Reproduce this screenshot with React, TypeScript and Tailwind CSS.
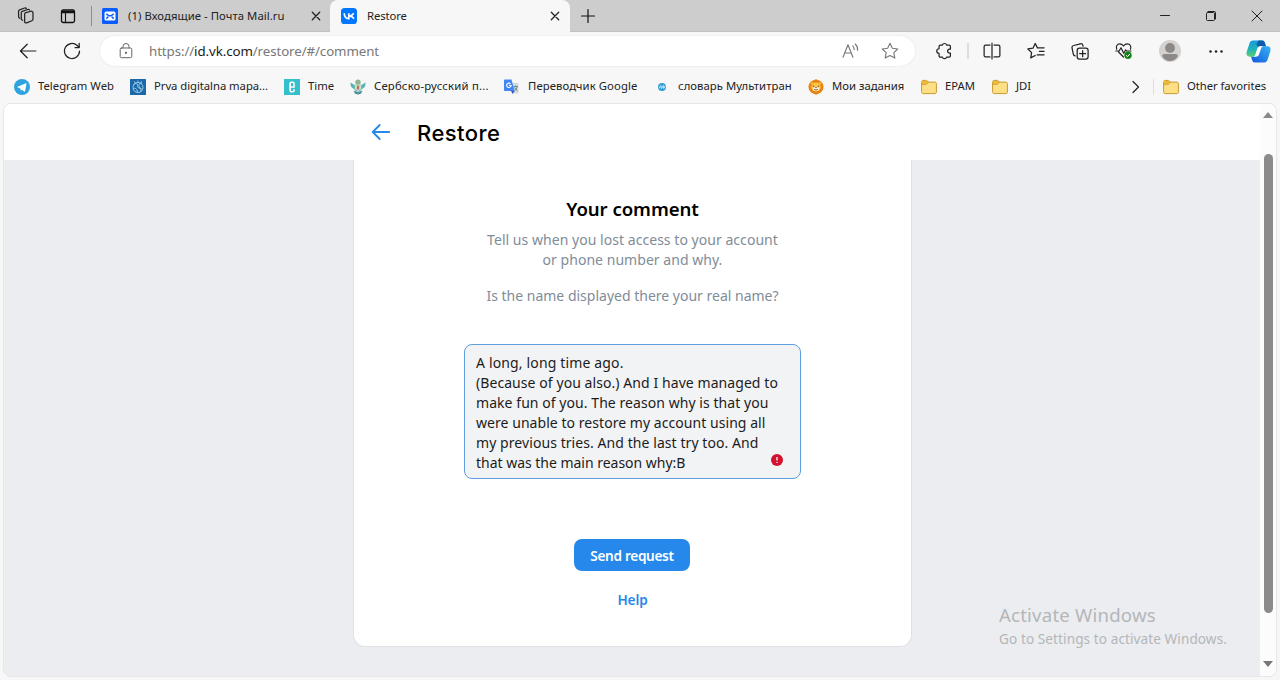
import React from "react";

type P = { children?: React.ReactNode; className?: string };

const Cell = ({ children, className = "" }: P) => (
  <div className={`flex h-full shrink-0 items-center justify-center ${className}`}>{children}</div>
);

const Icon = ({ children, className = "h-4 w-4" }: P) => (
  <svg viewBox="0 0 16 16" fill="none" stroke="currentColor" strokeWidth="1.1" strokeLinecap="round" strokeLinejoin="round" className={`shrink-0 ${className}`}>
    {children}
  </svg>
);

const Close = () => (
  <Icon className="h-4 w-4 text-[#222]">
    <path d="M4.3 4.3l7.4 7.4M11.7 4.3l-7.4 7.4" strokeWidth="1.3" />
  </Icon>
);

const Folder = () => (
  <Icon className="h-4 w-4">
    <path d="M.6 2.900c0-.9.6-1.500 1.500-1.500h3.400l1.900 1.700h6.500c.9 0 1.500.6 1.500 1.500v8.500c0 .9-.6 1.500-1.500 1.500H2.100c-.9 0-1.500-.6-1.500-1.500z" fill="#fddf85" stroke="#c99a2c" strokeWidth="1" />
    <path d="M1.100 2.900c0-.6.400-1 1-1h3.200l1.500 1.400L5.200 4.800H1.100z" fill="#f0b92e" stroke="none" />
    <path d="M.8 5.200h4.600l2-2" stroke="#c99a2c" strokeWidth="1" />
  </Icon>
);

const Bookmark = ({ icon, label, className = "", text = "" }: { icon: React.ReactNode; label: string; className?: string; text?: string }) => (
  <div className={`flex shrink-0 items-center gap-2 ${className}`}>
    {icon}
    <span className={`whitespace-nowrap ${text}`}>{label}</span>
  </div>
);

function TabStrip() {
  return (
    <div className="flex h-8 shrink-0 items-stretch border-b border-[#c2c2c2] bg-[#cdcdcd]">
      <Cell className="w-[52px]">
        <Icon className="h-[18px] w-[18px] text-[#222]">
          <path d="M7.2 5.3l5.2-1.5c.9-.2 1.8.3 1.8 1.2v5.8c0 .7-.4 1.2-1 1.400l-4.600 1.900c-.9.3-1.800-.2-1.800-1.100V6.500c0-.6.1-1 .4-1.200z" />
          <path d="M5 11.800l-.5-.3c-.5-.3-.7-.7-.7-1.300V5.200c0-.6.3-1.100.9-1.300l4.800-1.700c.7-.2 1.300 0 1.600.5" />
          <path d="M2.500 10l-.4-.3c-.5-.3-.7-.7-.7-1.300V3.800c0-.6.3-1.100.9-1.300L6.800.9c.6-.2 1.200 0 1.500.5" />
        </Icon>
      </Cell>
      <Cell className="w-8">
        <Icon className="h-4 w-4 text-[#111]">
          <rect x="1.500" y="2" width="13" height="12.500" rx="1.800" strokeWidth="1.300" />
          <path d="M2 3.500h12M2 4.500h12" strokeWidth="1.500" />
          <path d="M5.500 5v9" />
        </Icon>
      </Cell>
      <div className="ml-[7px] mt-[6px] h-5 w-px bg-[#8d8d8d]" />
      <div className="flex w-[238px] items-center pl-[10px] text-[11.3px] text-[#222]">
        <svg viewBox="0 0 16 16" className="h-4 w-4 shrink-0">
          <rect width="16" height="16" rx="1.500" fill="#0a5cff" />
          <rect x="2.500" y="3.500" width="11" height="9" rx="1.500" fill="#fff" />
          <path d="M4.300 5.800l2.700 2h2l2.700-2M4.300 10.600l2-1.900M11.700 10.600l-2-1.900" fill="none" stroke="#0a5cff" strokeWidth="1.500" />
        </svg>
        <span className="ml-[10px] w-[180px] whitespace-nowrap pt-px tracking-[0.06px]">(1) Входящие - Почта Mail.ru</span>
        <Close />
      </div>
      <div className="-mb-px flex w-60 items-center rounded-t-lg bg-[#f7f7f7] pb-px pl-[11px] text-[11.3px] text-[#222]">
        <svg viewBox="0 0 16 16" className="h-4 w-4 shrink-0">
          <rect width="16" height="16" rx="3.600" fill="#0077ff" />
          <path d="M3.200 5.200c.2 3.400 1.900 5.300 4.600 5.500V5.200M12.600 5.200C12 6.800 10.600 7.800 8 8c2.800.2 4.300 1.300 4.900 2.800" fill="none" stroke="#fff" strokeWidth="1.700" />
        </svg>
        <span className="ml-[10px] w-[180px] whitespace-nowrap pt-px tracking-[-0.1px]">Restore</span>
        <Close />
      </div>
      <Cell className="w-9">
        <Icon className="h-4 w-4 text-[#111]">
          <path d="M8 1.500v13M1.500 8h13" strokeWidth="1.200" />
        </Icon>
      </Cell>
      <div className="flex-1" />
      <Cell className="w-[46px] text-[#222]">
        <Icon><path d="M3.500 7.500h9" strokeWidth="1" /></Icon>
      </Cell>
      <Cell className="w-[46px] text-[#222]">
        <Icon>
          <rect x="3.500" y="4.500" width="8" height="8" rx="1" strokeWidth="1" />
          <path d="M5 3.500h6.500c.6 0 1 .4 1 1V11" strokeWidth="1" />
        </Icon>
      </Cell>
      <Cell className="w-[46px] text-[#222]">
        <Icon><path d="M3 3l10 10M13 3L3 13" strokeWidth="1" /></Icon>
      </Cell>
    </div>
  );
}

function Toolbar() {
  return (
    <div className="flex h-[38px] shrink-0 items-center pl-[6px] text-[#222]">
      <Cell className="w-11">
        <Icon className="h-[18px] w-[18px]"><path d="M15 8H1.300M7.300 2L1.300 8l6 6" strokeWidth="1.100" /></Icon>
      </Cell>
      <Cell className="w-11">
        <Icon className="h-[18px] w-[18px]"><path d="M14.700 8A6.700 6.700 0 1 1 12.600 3.100L14.300 4.800M14.400 1.200v3.700h-3.700" strokeWidth="1.100" /></Icon>
      </Cell>
      <div className="ml-[6px] flex h-[30px] w-[815px] shrink-0 items-center rounded-full bg-white pl-[18px] shadow-[0_0_2px_#ddd]">
        <Icon className="h-4 w-4 text-[#666]">
          <rect x="2.200" y="5" width="11.600" height="9.700" rx="1.300" strokeWidth="1" />
          <path d="M5 5V3.500a3 3 0 0 1 6 0V5" strokeWidth="1" />
          <circle cx="8" cy="9.800" r=".6" fill="currentColor" />
        </Icon>
        <span className="ml-[15px] flex-1 whitespace-nowrap pt-px text-[13.3px] tracking-[-0.09px] text-[#777]">
          https://<span className="text-[#1b1b1b]">id.vk.com</span>/restore/#/comment
        </span>
        <Icon className="mr-[22px] h-[18px] w-[18px] text-[#777]">
          <path d="M1.800 13.500L6.200 2.500l4.400 11M3.400 9.800h5.700" strokeWidth="1" />
          <path d="M10.500 3.500c.9.9 1.300 2 1.200 3.300M12.600 1.800c1.700 1.500 2.400 3.400 2.100 5.600" strokeWidth="1" />
        </Icon>
        <Icon className="mr-4 h-[18px] w-[18px] text-[#777]">
          <path d="M8 1.200l2.100 4.300 4.800.7-3.500 3.300.9 4.800L8 12l-4.300 2.300.9-4.800L1.100 6.200l4.800-.7z" strokeWidth="1" />
        </Icon>
      </div>
      <Cell className="ml-[7px] w-[43px]">
        <Icon className="h-[18px] w-[18px]">
          <path d="M3.600 5.900V4c0-.7.500-1.200 1.200-1.200h1.800a1.900 1.900 0 0 1 3.700 0h2.200c.7 0 1.200.5 1.200 1.200v2.400h-.8a1.700 1.700 0 0 0 0 3.400h.8v2.400c0 .7-.5 1.200-1.200 1.200h-2.200a1.900 1.900 0 0 1-3.700 0H4.800c-.7 0-1.200-.5-1.200-1.200v-2.100a2 2 0 0 1 0-4.100z" />
        </Icon>
      </Cell>
      <div className="ml-[2px] mr-px h-4 w-[2px] bg-[#dcdcdc]" />
      <Cell className="w-[43px]">
        <Icon className="h-[18px] w-[18px]"><path d="M6.200 2.700H2.300c-.8 0-1.300.5-1.300 1.300v8c0 .8.5 1.300 1.300 1.300h3.900M9.800 2.700h3.900c.8 0 1.300.5 1.300 1.300v8c0 .8-.5 1.300-1.300 1.300H9.800M8 1v14" /></Icon>
      </Cell>
      <Cell className="w-[45px]">
        <Icon className="h-[18px] w-[18px]">
          <path d="M9.500 5.200h-.2L7.300 1.300 5.300 5.500l-4.500.7 3.300 3.200-.8 4.700 4-2.100M9.500 5.200h5.700M11 8.300h4.200M9 11.400h6.200" />
        </Icon>
      </Cell>
      <Cell className="w-11">
        <Icon className="h-[18px] w-[18px]">
          <rect x="5.500" y="5.500" width="9.700" height="9.700" rx="2" />
          <path d="M10.350 7.700v5.300M7.700 10.350H13M3.700 12.300c-.8-.1-1.400-.6-1.600-1.400L.9 5.200c-.2-1 .4-1.900 1.400-2.100l6.100-1.500c1-.2 1.900.4 2.200 1.400l.1.600" />
        </Icon>
      </Cell>
      <Cell className="w-11">
        <svg viewBox="0 0 18 18" className="h-[18px] w-[18px]" fill="none" stroke="currentColor" strokeWidth="1.200" strokeLinejoin="round" strokeLinecap="round">
          <path d="M1.700 7.200C.5 4.300 2.300 1.900 4.700 1.900c1.700 0 2.800.8 3.800 2.100 1-1.300 2.100-2.100 3.900-2.100 2.500 0 4.200 2.500 3.100 5.300M3.500 10l5 5M.8 9h3.300l1.900-3.300 2.700 5.600 2-3.500.9 1.200H16" />
          <circle cx="13" cy="13.300" r="3.700" fill="#138018" stroke="none" />
          <path d="M11.300 13.500l1.200 1.100 2.300-2.400" stroke="#fff" strokeWidth="1" />
        </svg>
      </Cell>
      <Cell className="w-12">
        <svg viewBox="0 0 22 22" className="h-[22px] w-[22px]">
          <circle cx="11" cy="11" r="11" fill="#d4d2d0" />
          <circle cx="11" cy="8" r="4.900" fill="#8b8886" />
          <path d="M3.200 16.200c0-1.300.9-2.100 2.200-2.100h11.200c1.300 0 2.200.8 2.200 2.100-1.600 3-4.600 4.800-7.800 4.800s-6.200-1.800-7.800-4.800z" fill="#8b8886" />
        </svg>
      </Cell>
      <Cell className="w-11">
        <Icon><g fill="#222" stroke="none"><circle cx="2.500" cy="8.500" r="1.250" /><circle cx="8" cy="8.500" r="1.250" /><circle cx="13.500" cy="8.500" r="1.250" /></g></Icon>
      </Cell>
      <Cell className="w-10">
        <svg viewBox="0 1 24 22" className="h-[23px] w-[25px]">
          <defs>
            <linearGradient id="cpA" x1="0" y1="0" x2="0" y2="1"><stop offset="0" stopColor="#159be0" /><stop offset=".55" stopColor="#20b5b5" /><stop offset="1" stopColor="#5fd070" /></linearGradient>
            <linearGradient id="cpB" x1="1" y1="0" x2="0" y2="1"><stop offset="0" stopColor="#35b4f2" /><stop offset="1" stopColor="#1457dc" /></linearGradient>
          </defs>
          <path d="M7 1.500h8.500c1.700 0 2.200 1 2.700 2.500l1 3h-5c-1.500 0-2.200.9-2.700 2.500L9.700 15c-.5 1.300-1.300 2-2.700 2H3.500C1 17 0 15 .6 12.500L3.300 4.200C3.900 2.400 5 1.500 7 1.500z" fill="url(#cpA)" />
          <path d="M12 1.500h3.500c1.700 0 2.200 1 2.700 2.500l1 3h-5c-1 0-1.700.4-2.200 1.300L10 5z" fill="#0d5cab" />
          <path d="M17 22.500H8.500c-1.700 0-2.200-1-2.700-2.500l-1-3h2.500c1.500 0 2.200-.9 2.700-2.500L14.300 9c.5-1.300 1.300-2 2.700-2h3.500c2.500 0 3.500 2 2.900 4.500l-2.700 8.300c-.6 1.800-1.700 2.700-3.700 2.700z" fill="url(#cpB)" />
          <path d="M11 8.600c.5-1.100 1.500-1.600 2.900-1.600h2.500c-1 .3-1.500 1-1.900 2l-2.200 6.400c-.5 1.100-1.500 1.600-2.900 1.600H7c1-.3 1.500-1 1.900-2z" fill="#fff" />
        </svg>
      </Cell>
    </div>
  );
}

function Favorites() {
  return (
    <div className="flex h-[33px] shrink-0 items-center pl-[14px] text-[11.3px] text-[#222]">
      <Bookmark className="w-[116px]" label="Telegram Web" icon={
        <svg viewBox="0 0 16 16" className="h-4 w-4 shrink-0"><circle cx="8" cy="8" r="8" fill="#2fa3df" /><path d="M3 7.900l8.800-3.600c.5-.1.800.1.700.7L11.100 12c-.1.500-.5.600-.9.400L8 10.700l-1.200 1.100-.4-2.300z" fill="#fff" /></svg>
      } />
      <Bookmark className="w-[154px]" text="tracking-[-0.05px]" label="Prva digitalna mapa..." icon={
        <svg viewBox="0 0 16 16" className="h-4 w-4 shrink-0" fill="none" stroke="#a9d6ee" strokeWidth=".9"><rect width="16" height="16" rx=".6" fill="#1b69a8" stroke="none" /><circle cx="8" cy="8.500" r="5" /><path d="M3.500 5.500c2-2 4-1 4 1s1 3 4 3M12 4c-3 0-4 2-2.500 4s2 3 1 5M3 10c2-1.500 4-.5 4.500 3M4 2.500l1.500 1M8 1.500v1.500M12 2.500l-1.500 1" /></svg>
      } />
      <Bookmark className="w-[66px]" label="Time" icon={
        <svg viewBox="0 0 16 16" className="h-4 w-4 shrink-0" fill="none"><rect width="16" height="16" fill="#34bfcd" /><path d="M10 10.300v1.200c0 .7-.5 1.200-1.200 1.200H7.300c-.7 0-1.200-.5-1.200-1.200v-7c0-.7.5-1.200 1.200-1.200h1.500c.7 0 1.200.5 1.200 1.200V8H6.300" stroke="#fff" strokeWidth="1.600" /></svg>
      } />
      <Bookmark className="w-[154px]" text="tracking-[0.2px]" label="Сербско-русский п..." icon={
        <svg viewBox="0 0 16 16" className="h-4 w-4 shrink-0"><path d="M.5 3.500L4.500 6 8 4.500 11.500 6l4-2.500c.3 3.500-1 5.500-3.500 6.500l-2 2H6l-2-2C1.500 9 .2 7 .5 3.500z" fill="#55b5b4" /><circle cx="8" cy="3.200" r="2.700" fill="#8fb593" /><path d="M4.800 5.500h6.400v4.500L8 12.300 4.800 10z" fill="#d7ded0" /><path d="M6.800 6.500h2.400v4H6.800z" fill="#b37a64" /><path d="M3.500 11.500c3 1.500 6 1.500 9 0l-1.500 3.200-3 .8-3-.8z" fill="#4c9298" /></svg>
      } />
      <Bookmark className="w-[150px]" text="tracking-[0.1px]" label="Переводчик Google" icon={
        <svg viewBox="0 0 16 16" className="h-4 w-4 shrink-0"><path d="M6 4h7.500c.7 0 1 .4 1 1v8.500c0 .6-.4 1-1 1H9z" fill="#d8dadd" /><path d="M9.500 7.500h4.500M11.700 6.500v1M13.200 7.500c-.5 2-1.700 3.500-3 4.500M10.500 8.500c.7 1.500 1.700 2.500 3 3.300" fill="none" stroke="#6b8796" /><path d="M1 .500h6.500L10.500 12H1c-.6 0-1-.4-1-1V1.500c0-.6.400-1 1-1z" fill="#4285f4" /><path d="M7 12h3.500L8.700 15z" fill="#2a56c6" /><path d="M6.500 4.800a2.200 2.200 0 1 0 .6 1.700H5" fill="none" stroke="#fff" strokeWidth="1.100" /></svg>
      } />
      <Bookmark className="w-[154px]" text="tracking-[0.06px]" label="словарь Мультитран" icon={
        <svg viewBox="0 0 16 16" className="h-4 w-4 shrink-0"><circle cx="8" cy="8" r="4" fill="#2e9ed6" /><path d="M5 9.500L6.700 6.500l.8 3 1.700-3 .6 3L11.300 6.500" fill="none" stroke="#fff" strokeWidth=".7" /></svg>
      } />
      <Bookmark className="w-[113px]" label="Мои задания" icon={
        <svg viewBox="0 0 16 16" className="h-4 w-4 shrink-0"><path d="M8 .3l2.500.9 2.700 1.300L15 5l.6 3-.8 3-1.800 2.300-2.500 1.400-2.500 1-2.500-1L3 13.300 1.200 11 .4 8 1 5l1.800-2.500L5.500 1.200z" fill="#e98315" /><circle cx="4" cy="4.300" r="1.500" fill="#f9b42b" /><circle cx="12" cy="4.300" r="1.500" fill="#f9b42b" /><ellipse cx="8" cy="8" rx="4.800" ry="4.400" fill="#fbc64b" /><ellipse cx="8" cy="9.900" rx="3" ry="2.100" fill="#fff3d8" /><path d="M4.800 6.800l1.500.7M11.200 6.800l-1.500.7M6.300 10.300c1 .9 2.400.9 3.400 0" stroke="#6b3412" strokeWidth=".9" fill="none" /><path d="M7 8h2l-1 1.200z" fill="#6b3412" /></svg>
      } />
      <Bookmark className="w-[71px]" label="EPAM" icon={<Folder />} />
      <Bookmark className="w-[60px]" label="JDI" icon={<Folder />} />
      <div className="flex-1" />
      <Icon className="mr-[9px] h-4 w-4"><path d="M5 2.500L10.500 8 5 13.500" strokeWidth="1.200" /></Icon>
      <div className="mr-[9px] h-4 w-px bg-[#e0e0e0]" />
      <Bookmark className="w-[117px]" text="tracking-[-0.07px]" label="Other favorites" icon={<Folder />} />
    </div>
  );
}

function RestorePage() {
  return (
    <div className="relative flex min-w-0 flex-1 flex-col bg-[#ebedf0]">
      <header className="flex h-14 shrink-0 items-center bg-white pl-[367px]">
        <svg viewBox="0 0 20 18" className="h-[18px] w-5 shrink-0" fill="none" stroke="#2688eb" strokeWidth="1.800" strokeLinecap="round" strokeLinejoin="round">
          <path d="M18.200 9H2M8.700 2L1.700 9l7 7" />
        </svg>
        <h1 className="ml-[26px] pt-px font-[Inter,sans-serif] text-[22px] font-medium leading-7 tracking-[0.45px] text-black">Restore</h1>
      </header>
      <main className="ml-[349px] flex h-[487px] w-[559px] flex-col items-center rounded-b-xl border border-t-0 border-[#dfe1e5] bg-white pt-[37px]">
        <h2 className="whitespace-nowrap text-[18.6px] font-semibold leading-6 tracking-[-0.06px] text-black">Your comment</h2>
        <p className="mt-[9px] whitespace-nowrap text-center text-[14px] leading-5 tracking-[0.04px] text-[#818c99]">
          Tell us when you lost access to your account<br />or phone number and why.
        </p>
        <p className="mt-4 whitespace-nowrap text-[14px] leading-5 text-[#818c99]">Is the name displayed there your real name?</p>
        <div className="relative mt-[38px] h-[135px] w-[337px] whitespace-nowrap rounded-lg border border-[#5f9ddf] bg-[#f2f3f5] pl-[11px] pt-[8px] text-[14px] leading-5 text-[#1c1c1c]">
          <p className="tracking-[0.15px]">A long, long time ago.</p>
          <p className="tracking-[0.07px]">(Because of you also.) And I have managed to</p>
          <p className="tracking-[0.06px]">make fun of you. The reason why is that you</p>
          <p className="tracking-[0.05px]">were unable to restore my account using all</p>
          <p className="tracking-[0.07px]">my previous tries. And the last try too. And</p>
          <p className="tracking-[-0.02px]">that was the main reason why:B</p>
          <svg viewBox="0 0 12 12" className="absolute bottom-3 right-[17px] h-3 w-3">
            <circle cx="6" cy="6" r="6" fill="#d3122f" />
            <path d="M6 3v3.400M6 8v1" stroke="#fff" strokeWidth="1.300" />
          </svg>
        </div>
        <button className="mr-px mt-[60px] h-8 w-[116px] whitespace-nowrap rounded-lg bg-[#2688eb] pt-px text-[13.6px] font-semibold leading-5 tracking-[-0.3px] text-white">Send request</button>
        <a className="mt-[19px] text-[13.6px] font-semibold leading-5 tracking-[-0.1px] text-[#2688eb]">Help</a>
      </main>
      <div className="absolute left-[995px] top-[499px] whitespace-nowrap text-[#b4b6b9]">
        <div className="text-[18.6px] leading-6 tracking-[0.2px]">Activate Windows</div>
        <div className="pt-px text-[13.6px] leading-[22px] tracking-[0.08px]">Go to Settings to activate Windows.</div>
      </div>
    </div>
  );
}

export default function App() {
  return (
    <div className="flex h-[680px] w-[1280px] flex-col overflow-hidden bg-[#f7f7f7] font-['Noto_Sans',sans-serif]">
      <TabStrip />
      <Toolbar />
      <Favorites />
      <div className="mx-[3px] mb-[3px] flex min-h-0 flex-1 overflow-hidden rounded-lg border border-[#e6e6e6]">
        <RestorePage />
        <div className="flex w-4 shrink-0 flex-col items-center bg-[#fcfcfc]">
          <svg viewBox="0 0 10 6" className="mt-[8px] h-[6px] w-[10px] shrink-0"><path d="M0 6L5 0l5 6z" fill="#8a8a8a" /></svg>
          <div className="mt-[36px] h-[459px] w-[9px] shrink-0 rounded-full bg-[#8b8b8b]" />
          <div className="flex-1" />
          <svg viewBox="0 0 10 6" className="mb-[9px] h-[6px] w-[10px] shrink-0"><path d="M0 0l5 6 5-6z" fill="#777" /></svg>
        </div>
      </div>
    </div>
  );
}
